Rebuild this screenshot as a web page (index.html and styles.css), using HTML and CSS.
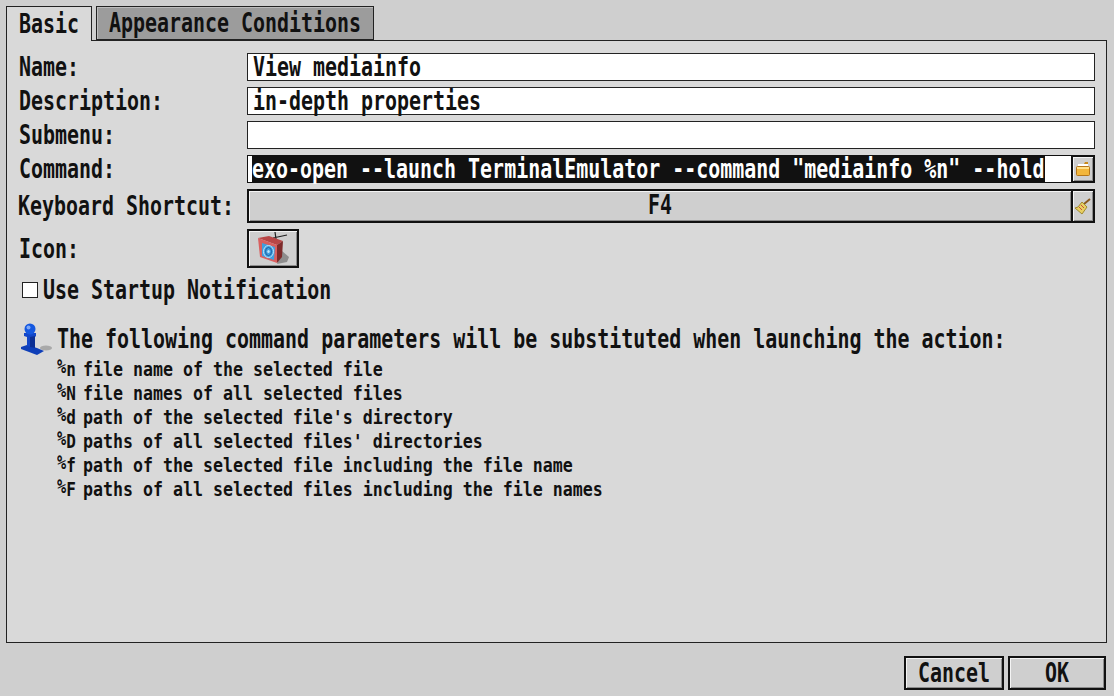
FILE: index.html
```html
<!DOCTYPE html>
<html lang="en">
<head>
  <meta charset="UTF-8" />
  <title>Edit Action</title>
  <link rel="stylesheet" href="styles.css">
</head>
<body>
  <div class="tabs">
    <div class="tab tab-active"><span class="tx">Basic</span></div>
    <div class="tab tab-other"><span class="tx">Appearance Conditions</span></div>
  </div>

  <div class="panel">
    <div class="form">
      <label class="label"><span class="tx">Name:</span></label>
      <div class="entry"><span class="tx">View mediainfo</span></div>

      <label class="label"><span class="tx">Description:</span></label>
      <div class="entry"><span class="tx">in-depth properties</span></div>

      <label class="label"><span class="tx">Submenu:</span></label>
      <div class="entry"></div>

      <label class="label"><span class="tx">Command:</span></label>
      <div class="joined">
        <div class="entry-inner"><div class="selected"><span class="tx">exo-open --launch TerminalEmulator --command "mediainfo %n" --hold</span></div></div>
        <div class="side-btn side-btn-small">
          <!-- folder -->
          <svg width="16" height="16" viewBox="0 0 16 16">
            <path d="M3 3h6l1-2h3v5H3z" fill="#c98a1c"/>
            <rect x="3" y="3" width="10" height="3" fill="#fff"/>
            <rect x="1.5" y="5.5" width="13" height="9" rx="1" fill="#f2b63c" stroke="#b5761a" stroke-width="1"/>
            <rect x="2" y="6" width="12" height="2" fill="#ffe08a"/>
          </svg>
        </div>
      </div>

      <label class="label label-wide"><span class="tx">Keyboard Shortcut:</span></label>
      <div class="joined joined-tall">
        <div class="shortcut"><span class="tx tx-center">F4</span></div>
        <div class="side-btn">
          <!-- broom -->
          <svg width="18" height="18" viewBox="0 0 18 18">
            <path d="M10 7l6-5" stroke="#8a5a20" stroke-width="2" fill="none"/>
            <path d="M8 5l5 5-5 7-7-6 3-1z" fill="#e8cf62" stroke="#a08a30" stroke-width="1"/>
            <path d="M7 8l3 3M5 10l3 3" stroke="#c9513a" stroke-width="1"/>
          </svg>
        </div>
      </div>

      <label class="label"><span class="tx">Icon:</span></label>
      <div class="icon-btn">
        <!-- tv -->
        <svg width="36" height="35" viewBox="0 0 36 35">
          <path d="M27 20l7 6-2 5-10 2z" fill="#8d8d8d"/>
          <path d="M18 7L32 4M20 1l1 7" stroke="#222" stroke-width="1.2" fill="none"/>
          <path d="M3 7l11-2 14 5-6 4z" fill="#b84646"/>
          <path d="M3 7l19 7v18L5 26z" fill="#d86060"/>
          <path d="M22 14l6-4-1 16-5 6z" fill="#7e2a2a"/>
          <path d="M7 12l13 4-1 13-12-4z" fill="#3f9fe0"/>
          <ellipse cx="13.5" cy="20.5" rx="5" ry="6" fill="none" stroke="#bfe6fb" stroke-width="1"/>
          <ellipse cx="13.5" cy="20.5" rx="3" ry="4" fill="none" stroke="#1f5f9f" stroke-width="1"/>
          <ellipse cx="13.5" cy="20.5" rx="1.2" ry="1.6" fill="#bfe6fb"/>
        </svg>
      </div>
    </div>

    <div class="check-row">
      <span class="checkbox"></span>
      <span class="tx">Use Startup Notification</span>
    </div>

    <div class="info">
      <svg class="info-icon" width="34" height="34" viewBox="0 0 34 34">
        <ellipse cx="27" cy="26" rx="6" ry="2.5" fill="#a9a9a9"/>
        <path d="M2 25l6-2 10 3 7 3-7 4-16-6z" fill="#0f3fb8"/>
        <path d="M5 11h12v3l-1 1v11l-8-2V15l-3-1z" fill="#1246c8"/>
        <path d="M11 15l5-1v12l-5-1z" fill="#0c2f94"/>
        <circle cx="11" cy="7" r="5.5" fill="#1558e0"/>
        <circle cx="9.5" cy="5.5" r="2" fill="#7ea8f7"/>
      </svg>
      <div class="info-title"><span class="tx">The following command parameters will be substituted when launching the action:</span></div>
    </div>

    <div class="params">
      <b class="key"><i>%</i>n</b><span class="tx tx-small">file name of the selected file</span>
      <b class="key"><i>%</i>N</b><span class="tx tx-small">file names of all selected files</span>
      <b class="key"><i>%</i>d</b><span class="tx tx-small">path of the selected file's directory</span>
      <b class="key"><i>%</i>D</b><span class="tx tx-small">paths of all selected files' directories</span>
      <b class="key"><i>%</i>f</b><span class="tx tx-small">path of the selected file including the file name</span>
      <b class="key"><i>%</i>F</b><span class="tx tx-small">paths of all selected files including the file names</span>
    </div>
  </div>

  <div class="buttons">
    <button class="btn btn-cancel"><span class="tx tx-center">Cancel</span></button>
    <button class="btn btn-ok"><span class="tx tx-center">OK</span></button>
  </div>
</body>
</html>
```

FILE: styles.css
```css
* {
  box-sizing: border-box;
  margin: 0;
  padding: 0;
}

html, body {
  height: 100%;
}

body {
  width: 1114px;
  height: 696px;
  padding: 6px 7px 6px 6px;
  overflow: hidden;
  background: #cfcfcf;
  color: #111;
  font-family: "DejaVu Sans Mono", monospace;
  font-size: 26px;
  font-weight: bold;
  display: flex;
  flex-direction: column;
}

.tx {
  display: inline-block;
  width: 100%;
  white-space: nowrap;
  transform: scaleX(0.767);
  transform-origin: 0 50%;
}

.tx-center {
  transform-origin: 50% 50%;
}

.tx-small {
  font-size: 20px;
  transform: scaleX(0.83);
}

.tabs {
  display: flex;
  align-items: flex-end;
  gap: 4px;
  height: 34px;
}

.tab {
  height: 34px;
  min-width: 0;
  padding: 0 12px;
  display: flex;
  align-items: center;
  background: #9c9c9c;
  border: 1px solid #222;
  box-shadow: inset 1px 1px 0 #bdbdbd;
}

.tab-active {
  position: relative;
  z-index: 1;
  width: 86px;
  height: 35px;
  margin-bottom: -1px;
  background: #d9d9d9;
  border-bottom: none;
  box-shadow: none;
}

.tab-other {
  width: 278px;
}

.panel {
  width: 1101px;
  height: 604px;
  padding: 12px 11px 0 12px;
  background: #d9d9d9;
  border: 1px solid #222;
}

.form {
  display: grid;
  grid-template-columns: 228px 848px;
  row-gap: 6px;
  align-items: center;
}

.label {
  line-height: 28px;
}

.label-wide {
  margin-left: -1px;
}

.entry {
  height: 28px;
  padding-left: 5px;
  line-height: 26px;
  background: #fff;
  border: 1px solid #222;
}

.joined {
  display: flex;
  height: 28px;
  background: #111;
  padding: 1px 2px 1px 1px;
}

.joined-tall {
  height: 34px;
  padding: 2px;
}

.entry-inner {
  flex: 1;
  min-width: 0;
  padding-left: 4px;
  line-height: 26px;
  background: #fff;
}

.selected {
  width: 793px;
  height: 26px;
  background: #111;
  color: #fff;
}

.shortcut {
  flex: 1;
  text-align: center;
  line-height: 29px;
  background: #cfcfcf;
  box-shadow: inset 1px 1px 0 #f4f4f4, inset -1px -1px 0 #8c8c8c;
}

.side-btn {
  width: 20px;
  margin-left: 2px;
  display: flex;
  align-items: center;
  justify-content: center;
  background: #cfcfcf;
  box-shadow: inset 1px 1px 0 #f4f4f4, inset -1px -1px 0 #8c8c8c;
}

.side-btn-small {
  margin-top: 1px;
  margin-bottom: 1px;
}

.icon-btn {
  width: 52px;
  height: 39px;
  display: flex;
  align-items: center;
  justify-content: center;
  background: #cfcfcf;
  border: 2px solid #111;
  box-shadow: inset 1px 1px 0 #f4f4f4, inset -1px -1px 0 #8c8c8c;
}

.check-row {
  display: flex;
  align-items: center;
  gap: 5px;
  margin-top: 10px;
  margin-left: 3px;
  height: 24px;
}

.checkbox {
  flex: none;
  width: 16px;
  height: 16px;
  background: #fff;
  border: 1px solid #222;
}

.info {
  display: flex;
  align-items: center;
  margin-top: 20px;
  height: 34px;
}

.info-icon {
  flex: none;
  margin-right: 4px;
}

.info-title {
  flex: 1;
  min-width: 0;
}

.params {
  display: grid;
  grid-template-columns: 26px minmax(0, 1fr);
  grid-auto-rows: 24px;
  margin-top: 1px;
  margin-left: 38px;
  line-height: 24px;
}

.key {
  font-size: 20px;
  white-space: nowrap;
  transform: scaleX(0.8);
  transform-origin: 0 50%;
}

.key i {
  display: inline-block;
  font-style: normal;
  font-size: 19px;
  transform: translateY(-3px);
}

.buttons {
  display: flex;
  justify-content: flex-end;
  gap: 4px;
  margin-top: 13px;
  margin-right: 1px;
}

.btn {
  height: 34px;
  font: inherit;
  color: inherit;
  background: #cfcfcf;
  border: 2px solid #111;
  box-shadow: inset 1px 1px 0 #f4f4f4, inset -1px -1px 0 #8c8c8c;
}

.btn-cancel {
  width: 100px;
}

.btn-ok {
  width: 98px;
}
```
